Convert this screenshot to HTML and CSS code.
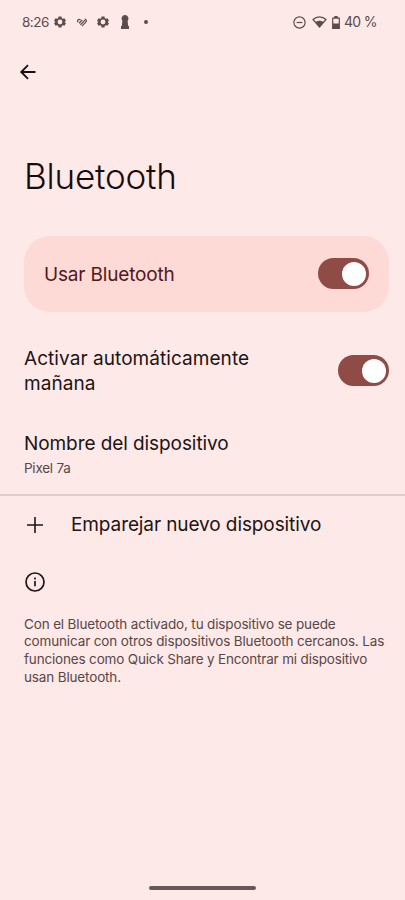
FILE: index.html
```html
<!DOCTYPE html>
<html lang="es">
<head>
<meta charset="utf-8">
<meta name="viewport" content="width=device-width, initial-scale=1">
<title>Bluetooth</title>
<link rel="stylesheet" href="styles.css">
</head>
<body>
<div class="screen">
  <header class="status">
    <span class="clock">8:26</span>
    <svg class="gear" viewBox="0 0 24 24"><path fill-rule="evenodd" d="M9 1h6l.6 3.3 2.1 1.2 3.2-1.1 3 5.2-2.6 2.2v.4l2.6 2.2-3 5.2-3.2-1.1-2.1 1.2L15 23H9l-.6-3.3-2.1-1.2-3.2 1.1-3-5.2 2.6-2.2v-.4L.1 9.600l3-5.200 3.200 1.100 2.100-1.200zM12 7.200a4.800 4.800 0 1 0 0 9.600 4.800 4.800 0 0 0 0-9.600z"/></svg>
    <svg class="heart" viewBox="0 0 10 9"><path d="M.8 4.200C-.1 2 1.800.7 3.500 1.900M2 5.200L5.300 1.900M3.400 6.700L8 2.100M4.900 8.100L8.600 4.400C10 2.900 9.200 1.200 7.800 1.100"/></svg>
    <svg class="gear gear-second" viewBox="0 0 24 24"><path fill-rule="evenodd" d="M9 1h6l.6 3.3 2.1 1.2 3.2-1.1 3 5.2-2.6 2.2v.4l2.6 2.2-3 5.2-3.2-1.1-2.1 1.2L15 23H9l-.6-3.3-2.1-1.2-3.2 1.1-3-5.2 2.6-2.2v-.4L.1 9.600l3-5.200 3.200 1.100 2.100-1.200zM12 7.200a4.800 4.800 0 1 0 0 9.600 4.800 4.800 0 0 0 0-9.600z"/></svg>
    <svg class="pawn" viewBox="0 0 8 14"><path d="M4 0a3.600 3.600 0 0 1 2.600 6L7.200 11H8V14H0v-3h.8L1.400 6A3.600 3.600 0 0 1 4 0z"/></svg>
    <i class="dot"></i>
    <div class="system">
      <svg class="dnd" viewBox="0 0 13 13"><circle cx="6.500" cy="6.500" r="5.600"/><path d="M3.600 6.500h5.800"/></svg>
      <svg class="wifi" viewBox="0 0 15 12"><path class="line" d="M1 3.500C4.700-.1 10.300-.1 14 3.500L7.500 11z"/><path d="M3.400 6.300c2.300-2 5.900-2 8.200 0L7.500 11z"/></svg>
      <svg class="battery" viewBox="0 0 8 13"><path class="line" d="M.7 2.100h6.600v10.200H.7z"/><path d="M2.300 0h3.400v2H2.300zM.7 7.500h6.600v5H.7z"/></svg>
      <span class="percent">40 %</span>
    </div>
  </header>
  <nav class="toolbar">
    <svg class="back" viewBox="0 0 16 16"><path d="M15.500 8H1.200M8 1.200L1.200 8 8 14.800"/></svg>
  </nav>
  <h1>Bluetooth</h1>
  <main>
    <section class="card">
      <span class="label use">Usar Bluetooth</span>
      <span class="switch"></span>
    </section>
    <section class="row">
      <span class="label"><span class="auto">Activar automáticamente</span><br><span class="tomorrow">mañana</span></span>
      <span class="switch"></span>
    </section>
    <section class="device">
      <div class="label name">Nombre del dispositivo</div>
      <div class="model">Pixel 7a</div>
    </section>
    <section class="pair">
      <svg class="plus" viewBox="0 0 16 16"><path d="M8 0v16M0 8h16"/></svg>
      <span class="label new">Emparejar nuevo dispositivo</span>
    </section>
    <svg class="info" viewBox="0 0 20 20"><circle cx="10" cy="10" r="9"/><path d="M10 9v5.300M10 5.500v1.900"/></svg>
    <p class="help"><span class="first">Con el Bluetooth activado, tu dispositivo se puede</span><br><span class="second">comunicar con otros dispositivos Bluetooth cercanos. Las</span><br><span class="third">funciones como Quick Share y Encontrar mi dispositivo</span><br><span class="fourth">usan Bluetooth.</span></p>
  </main>
  <div class="handle"></div>
</div>
</body>
</html>
```
FILE: styles.css
```css
* { box-sizing: border-box; }
body { margin: 0; font-family: Inter, Roboto, sans-serif; background: #fce9e8; color: #211414; }
svg { display: block; flex: none; overflow: visible; }
.screen { width: 405px; height: 900px; display: flex; flex-direction: column; overflow: hidden; }
.status { height: 44px; padding: 0 28px 0 22px; display: flex; align-items: center; color: #5d4c4c; font-size: 14px; flex: none; }
.clock { width: 31px; white-space: nowrap; font-size: 13.5px; letter-spacing: -.5px; }
.status svg { fill: #5d4c4c; }
.gear { width: 12px; height: 12px; margin-left: 1px; }
.status .heart { width: 10px; height: 9px; margin-left: 11px; fill: none; stroke: #5d4c4c; stroke-width: 1.3; }
.gear-second { margin-left: 10px; }
.pawn { width: 8px; height: 14px; margin-left: 12px; }
.dot { width: 4px; height: 4px; border-radius: 50%; background: #5d4c4c; margin-left: 15px; }
.system { margin-left: auto; display: flex; align-items: center; }
.dnd { width: 13px; height: 13px; margin-right: 6px; }
.status .dnd { fill: none; stroke: #5d4c4c; stroke-width: 1.2; }
.wifi { width: 15px; height: 12px; margin-right: 5px; }
.battery { width: 8px; height: 13px; margin-right: 4px; }
.status .line { fill: none; stroke: #5d4c4c; stroke-width: 1.2; }
.percent { white-space: nowrap; width: 33px; height: 18px; line-height: 17px; letter-spacing: -.7px; }
.toolbar { height: 56px; padding: 20px 20px 0; flex: none; }
.back { width: 16px; height: 16px; fill: none; stroke: #171010; stroke-width: 1.8; }
h1 { margin: 0; height: 136px; padding: 54px 24px 0; font-size: 35px; line-height: 44px; font-weight: 350; letter-spacing: -.2px; color: #170c0c; flex: none; }
main { display: flex; flex-direction: column; }
.card { height: 76px; margin: 0 16px 0 24px; padding: 0 20px 1px; border-radius: 26px; background: #fddad6; display: flex; align-items: center; justify-content: space-between; }
.label { font-size: 19px; line-height: 25px; font-weight: 380; white-space: nowrap; }
.use { color: #51191a; letter-spacing: -.17px; padding-top: 2px; }
.auto { letter-spacing: .06px; }
.tomorrow { letter-spacing: .05px; }
.name { letter-spacing: -.08px; }
.new { letter-spacing: -.1px; }
.switch { width: 51px; height: 31px; border-radius: 16px; background: #8f4b45; padding: 3.5px; display: flex; justify-content: flex-end; flex: none; }
.switch::before { content: ""; width: 24px; height: 24px; border-radius: 50%; background: #fff; }
.row { height: 117px; padding: 0 16px 0 24px; display: flex; align-items: center; justify-content: space-between; }
.device { height: 67px; padding: 2px 24px 0; border-bottom: 2px solid #dfcbcb; }
.model { font-size: 13.5px; line-height: 18px; margin-top: 3px; color: #594747; letter-spacing: -.25px; }
.pair { height: 57px; padding-left: 27px; display: flex; align-items: center; gap: 28px; }
.plus { width: 16px; height: 16px; fill: none; stroke: #211414; stroke-width: 1.6; }
.info { width: 20px; height: 20px; margin: 19px 0 0 25px; fill: none; stroke: #211414; stroke-width: 1.7; }
.help { margin: 23.5px 0 0 24px; font-size: 13.5px; line-height: 17.7px; color: #594747; white-space: nowrap; }
.first { letter-spacing: -.15px; }
.second { letter-spacing: -.145px; }
.third { letter-spacing: -.17px; }
.fourth { letter-spacing: -.15px; }
.handle { width: 107px; height: 4px; border-radius: 2px; background: #685757; margin: auto auto 10px 149px; }
```
